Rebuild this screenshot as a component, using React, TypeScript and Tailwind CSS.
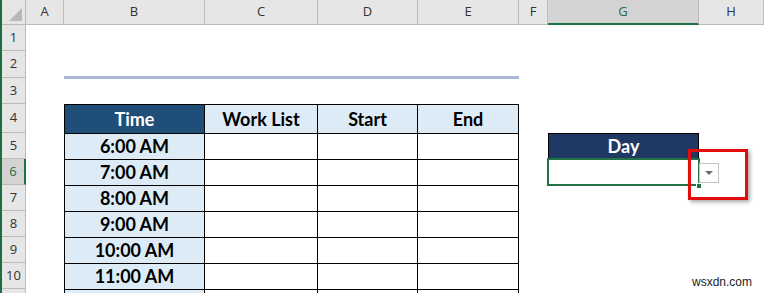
import React from "react";

const cols = ["A", "B", "C", "D", "E", "F", "G", "H"];
const colStart = [
  "col-start-2",
  "col-start-3",
  "col-start-4",
  "col-start-5",
  "col-start-6",
  "col-start-7",
  "col-start-8",
  "col-start-9",
];
const rowStart = [
  "row-start-2",
  "row-start-3",
  "row-start-4",
  "row-start-5",
  "row-start-6",
  "row-start-7",
  "row-start-8",
  "row-start-9",
  "row-start-10",
  "row-start-11",
  "row-start-12",
];

const times = ["6:00 AM", "7:00 AM", "8:00 AM", "9:00 AM", "10:00 AM", "11:00 AM", ""];

export default function App() {
  return (
    <div
      className="relative w-[764px] h-[293px] overflow-hidden bg-white border-l-2 border-[#1e6e42] grid grid-cols-[24px_38px_141px_113px_100px_101px_29px_151px_1fr] grid-rows-[25px_26px_27px_26px_29px_26px_26px_26px_26px_26px_26px_26px]"
      style={{ fontFamily: '"Open Sans", "Liberation Sans", sans-serif' }}
    >
      <div className="col-start-1 row-start-1 bg-[#e6e6e6] border-r border-b border-[#bcbcbc] flex items-end justify-end p-[3px]">
        <svg width="13" height="13" viewBox="0 0 13 13">
          <polygon points="13,0 13,13 0,13" fill="#b8b8b8" />
        </svg>
      </div>
      {cols.map((c, i) => (
        <div
          key={c}
          className={`${colStart[i]} row-start-1 flex items-center justify-center text-[13px] ${
            c === "G"
              ? "bg-[#d3d3d3] text-[#1e6e42] border-r border-[#bcbcbc] border-b-2 border-b-[#217346]"
              : "bg-[#e6e6e6] text-[#333] border-r border-b border-[#bcbcbc]"
          }`}
        >
          {c}
        </div>
      ))}
      {rowStart.map((r, i) => (
        <div
          key={r}
          className={`col-start-1 ${r} flex items-center justify-center text-[13px] ${
            i === 5
              ? "bg-[#d3d3d3] text-[#1e6e42] border-b border-[#bcbcbc] border-r-2 border-r-[#217346]"
              : "bg-[#e6e6e6] text-[#333] border-r border-b border-[#bcbcbc]"
          }`}
        >
          {i < 10 ? i + 1 : ""}
        </div>
      ))}

      <div className="col-start-3 col-end-7 row-start-3 self-end h-[3px] translate-y-[1px] bg-[#aab7d8]" />

      <div
        className="col-start-3 col-end-7 row-start-5 row-end-13 grid grid-cols-[140px_113px_100px_101px] grid-rows-[29px_26px_26px_26px_26px_26px_26px_26px] border-t border-l border-black text-[18px] font-bold text-black"
        style={{ fontFamily: 'Lato, "Open Sans", sans-serif' }}
      >
        <div className="bg-[#1f4e79] text-white border-r border-b border-black flex items-center justify-center">Time</div>
        <div className="bg-[#ddebf7] border-r border-b border-black flex items-center justify-center">Work List</div>
        <div className="bg-[#ddebf7] border-r border-b border-black flex items-center justify-center">Start</div>
        <div className="bg-[#ddebf7] border-r border-b border-black flex items-center justify-center">End</div>
        {times.map((t, i) => (
          <React.Fragment key={i}>
            <div className="bg-[#ddebf7] border-r border-b border-black flex items-center justify-center">{t}</div>
            <div className="border-r border-b border-black" />
            <div className="border-r border-b border-black" />
            <div className="border-r border-b border-black" />
          </React.Fragment>
        ))}
      </div>

      <div
        className="col-start-8 row-start-6 bg-[#203864] border border-black text-white text-[18px] font-bold flex items-center justify-center"
        style={{ fontFamily: 'Lato, "Open Sans", sans-serif' }}
      >
        Day
      </div>

      <div className="col-start-8 row-start-7 relative">
        <div className="absolute -left-px -top-px w-[153px] h-[28px] border-2 border-[#217346]" />
        <div className="absolute left-[148px] top-[24px] w-[6px] h-[6px] bg-[#217346] border border-white" />
        <div className="absolute left-[140px] top-[-10px] w-[60px] h-[51px] border-[3px] border-[#e30b0b] shadow-[2px_2px_4px_rgba(0,0,0,0.35)]" />
        <div className="absolute left-[151px] top-[4px] w-[20px] h-[20px] bg-white border border-[#c3c3c3] flex items-center justify-center">
          <svg width="8" height="5" viewBox="0 0 8 5">
            <polygon points="0,0 8,0 4,4" fill="#6b6b6b" />
          </svg>
        </div>
      </div>

      <div
        className="absolute left-[690px] top-[273px] text-[12px] text-[#222]"
        style={{ fontFamily: '"Liberation Sans", Arial, sans-serif' }}
      >
        wsxdn.com
      </div>
    </div>
  );
}
